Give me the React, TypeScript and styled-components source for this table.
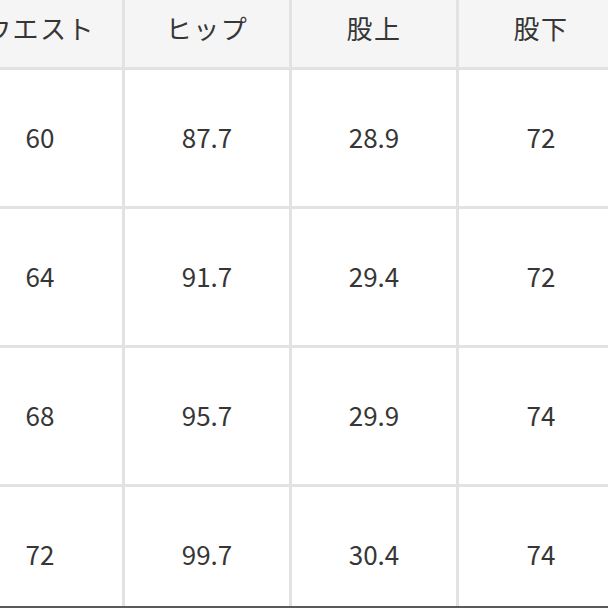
import React from "react";
import styled, { createGlobalStyle } from "styled-components";

const GlobalStyle = createGlobalStyle`
  html, body {
    margin: 0;
    padding: 0;
    background: #ffffff;
    overflow: hidden;
  }
`;

const Frame = styled.div`
  width: 608px;
  height: 608px;
  overflow: hidden;
  position: relative;
  background: #fff;
`;

const Table = styled.div`
  display: grid;
  grid-template-columns: repeat(5, 164px);
  grid-template-rows: 67px repeat(4, 136px);
  gap: 3px;
  background: #e2e2e2;
  margin-left: -42px;
  width: max-content;
  font-family: "Noto Sans CJK JP", "Noto Sans", sans-serif;
  color: #363636;
`;

const Cell = styled.div<{ head?: boolean }>`
  display: flex;
  align-items: center;
  justify-content: center;
  box-sizing: border-box;
  padding-bottom: ${({ head }) => (head ? "12px" : "4px")};
  background: ${({ head }) => (head ? "#f5f5f5" : "#ffffff")};
  font-size: ${({ head }) => (head ? "26px" : "26px")};
  font-weight: 400;
  letter-spacing: ${({ head }) => (head ? "1.5px" : "0")};
`;

const BottomEdge = styled.div`
  position: absolute;
  left: 0;
  right: 0;
  bottom: 0;
  height: 2px;
  background: #5a5a5a;
`;

const headers = ["ウエスト", "ヒップ", "股上", "股下", ""];
const rows = [
  ["60", "87.7", "28.9", "72", ""],
  ["64", "91.7", "29.4", "72", ""],
  ["68", "95.7", "29.9", "74", ""],
  ["72", "99.7", "30.4", "74", ""],
];

export default function App() {
  return (
    <Frame>
      <GlobalStyle />
      <Table>
        {headers.map((h, i) => (
          <Cell head key={"h" + i}>
            {h}
          </Cell>
        ))}
        {rows.map((r, ri) =>
          r.map((v, ci) => <Cell key={ri + "-" + ci}>{v}</Cell>)
        )}
      </Table>
      <BottomEdge />
    </Frame>
  );
}
